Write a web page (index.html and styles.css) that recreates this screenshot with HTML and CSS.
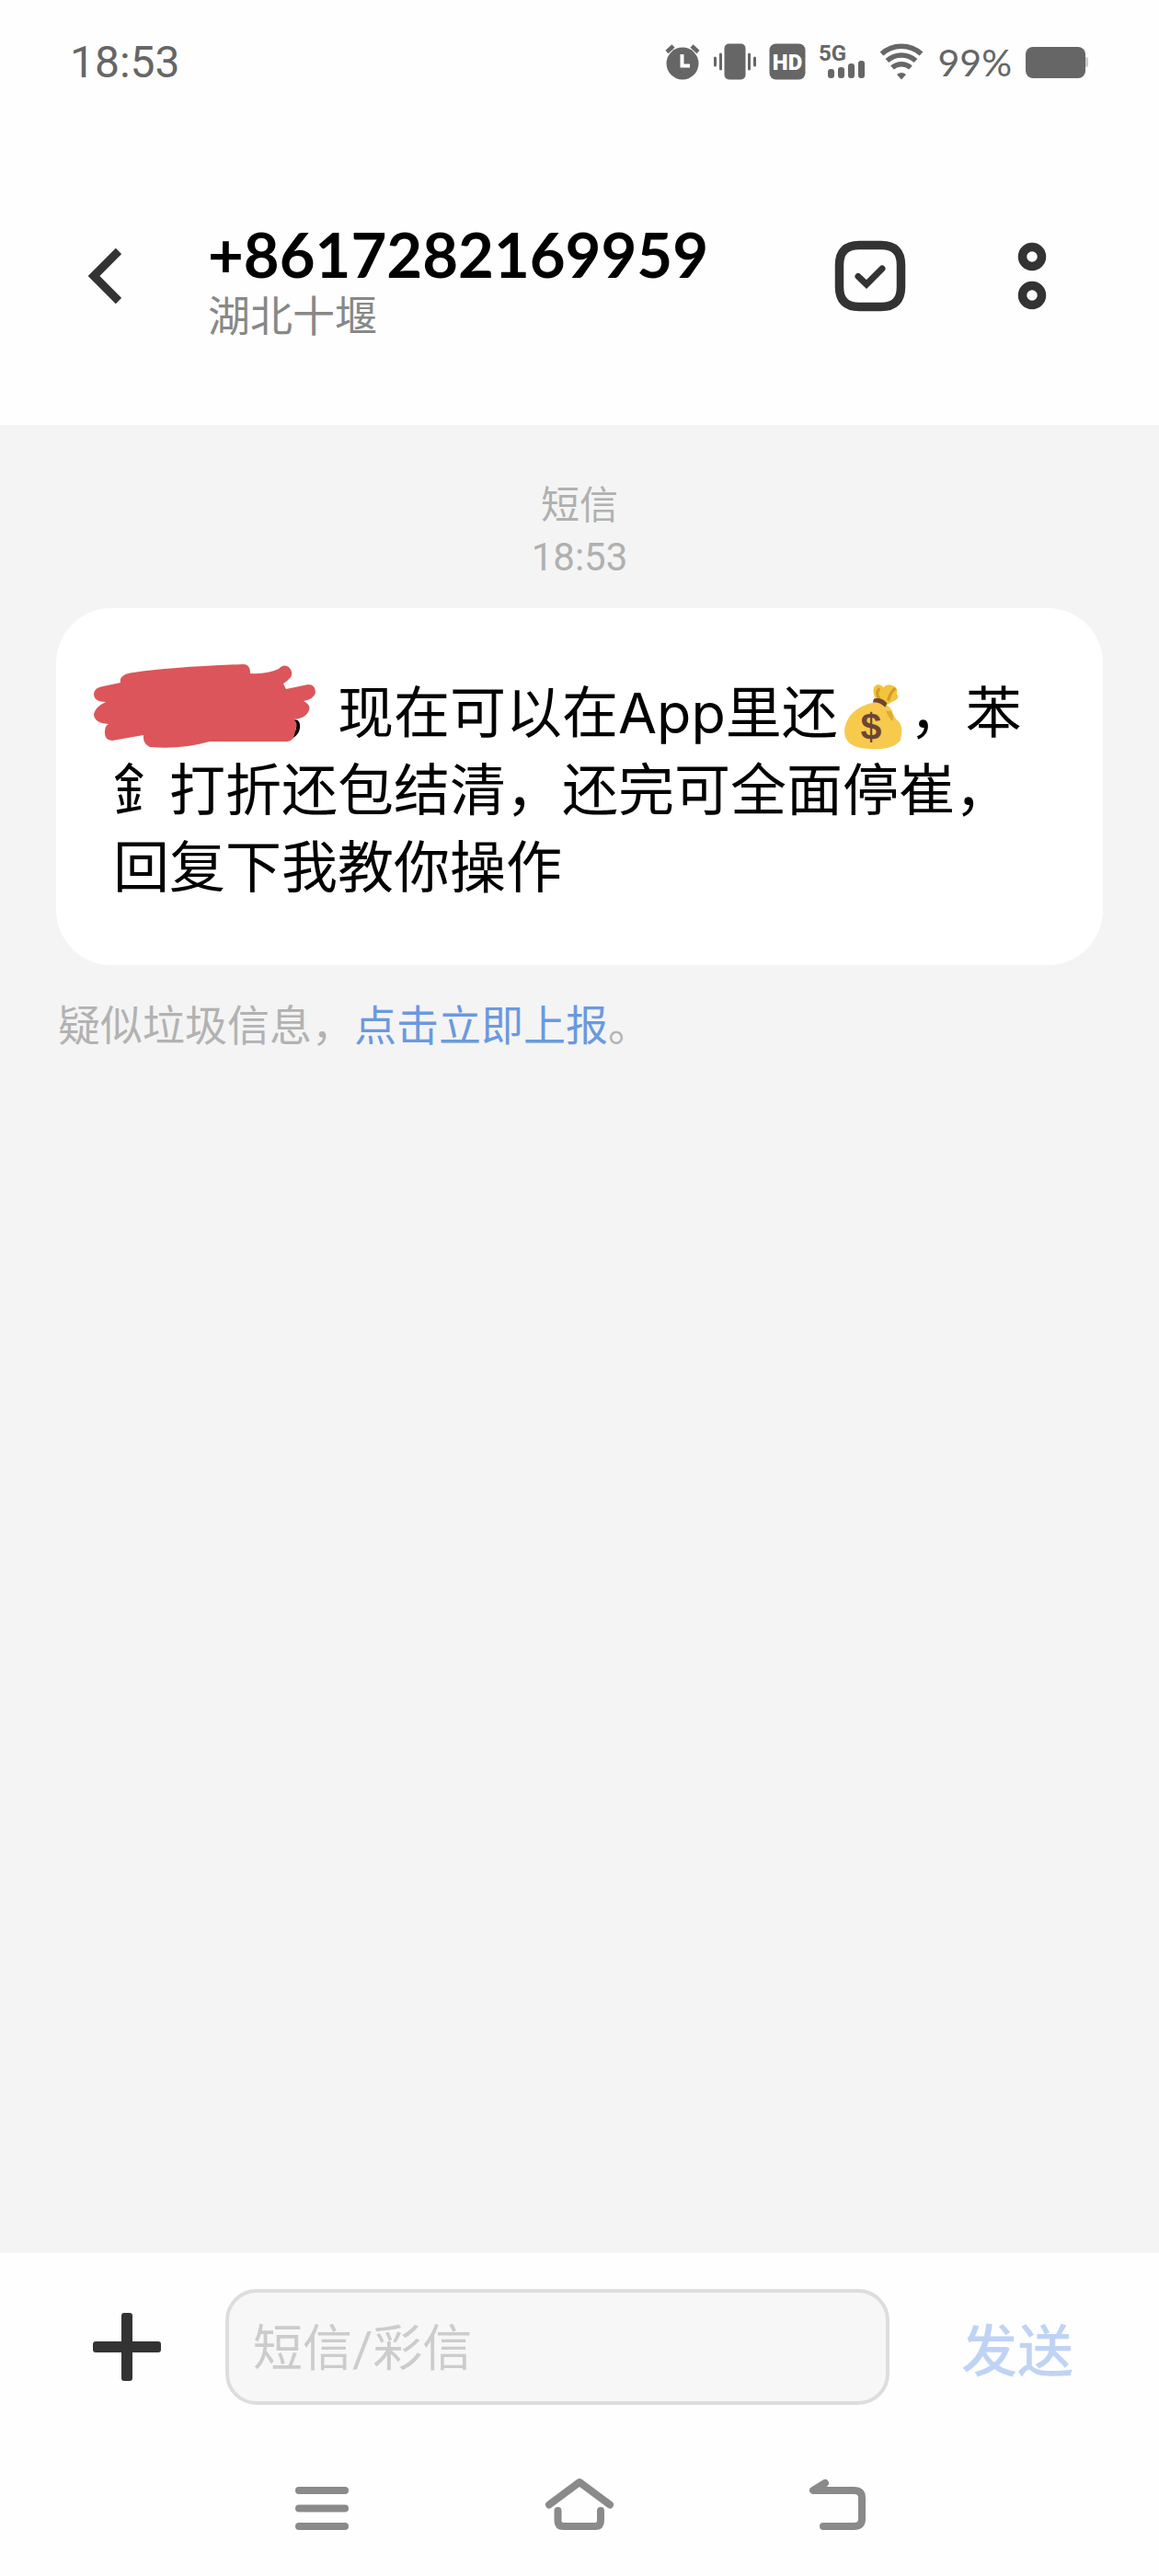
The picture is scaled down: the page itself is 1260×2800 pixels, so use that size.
FILE: index.html
```html
<!DOCTYPE html>
<html lang="zh-CN">
<head>
    <meta charset="UTF-8">
    <meta name="viewport" content="width=device-width, initial-scale=1.0">
    <title>短信</title>
    <link rel="stylesheet" href="styles.css">
</head>
<body>
    <div class="status-bar">
        <span class="clock">18:53</span>
        <div class="status-icons">
            <!-- alarm -->
            <svg width="40" height="40" viewBox="0 0 40 40">
                <circle cx="20" cy="22" r="17.5"/>
                <path d="M3 9.500l7-6.500M37 9.500l-7-6.500" stroke="#666" stroke-width="4.500"/>
                <path d="M19.500 12v12.500h8.500" fill="none" stroke="#fff" stroke-width="4"/>
            </svg>
            <!-- vibrate -->
            <svg width="46" height="40" viewBox="0 0 46 40">
                <rect x="11.500" y="0.500" width="23" height="39" rx="5"/>
                <path d="M1.500 16v8M7.500 12v16M38.500 12v16M44.500 16v8" stroke="#666" stroke-width="3" stroke-linecap="round"/>
            </svg>
            <!-- hd -->
            <svg width="40" height="40" viewBox="0 0 40 40">
                <rect x="0.500" y="0.500" width="39" height="39" rx="7"/>
                <text x="20" y="29" class="hd-text">HD</text>
            </svg>
            <!-- signal -->
            <svg width="52" height="40" viewBox="0 0 52 40">
                <text x="0" y="19" class="net-text">5G</text>
                <rect x="10" y="28" width="7" height="10" rx="3"/>
                <rect x="21" y="26" width="7" height="12" rx="3"/>
                <rect x="32" y="22" width="7" height="16" rx="3"/>
                <rect x="43" y="19" width="7" height="19" rx="3"/>
            </svg>
            <!-- wifi -->
            <svg width="48" height="40" viewBox="0 0 48 40">
                <g fill="none" stroke="#666" stroke-width="5.500">
                    <path d="M2.500 11.500a32 32 0 0 1 43 0"/>
                    <path d="M8.500 19a23 23 0 0 1 31 0"/>
                    <path d="M14 26.500a15 15 0 0 1 20 0"/>
                </g>
                <path d="M19 34a8 8 0 0 1 10 0l-5 5.500z"/>
            </svg>
            <span class="battery-level">99%</span>
            <!-- battery -->
            <svg width="70" height="40" viewBox="0 0 70 40">
                <rect x="64" y="15" width="5" height="11" rx="2" fill="#ccc"/>
                <rect x="1" y="4" width="65" height="34" rx="8"/>
            </svg>
        </div>
    </div>

    <header class="header">
        <button class="icon-button" aria-label="返回">
            <svg width="40" height="64" viewBox="0 0 40 64">
                <path d="M37 5L10 32l27 27" fill="none" stroke="#333" stroke-width="9"/>
            </svg>
        </button>
        <div class="contact">
            <h1>+8617282169959</h1>
            <p>湖北十堰</p>
        </div>
        <button class="icon-button" aria-label="选择">
            <svg width="78" height="78" viewBox="0 0 78 78">
                <path d="M27 5.500h24Q72.500 5.500 72.500 27v24Q72.500 72.500 51 72.500h-24Q5.500 72.500 5.500 51v-24Q5.500 5.500 27 5.500z" fill="none" stroke="#333" stroke-width="9.500"/>
                <path d="M26 39.500l9 8.500 17-17" fill="none" stroke="#333" stroke-width="7" stroke-linecap="round"/>
            </svg>
        </button>
        <button class="icon-button" aria-label="更多">
            <svg width="32" height="78" viewBox="0 0 32 78">
                <g fill="none" stroke="#333" stroke-width="9.500">
                    <circle cx="16" cy="18" r="10.500"/>
                    <circle cx="16" cy="60" r="10.500"/>
                </g>
            </svg>
        </button>
    </header>

    <main class="messages">
        <div class="message-time">
            <div>短信</div>
            <time>18:53</time>
        </div>
        <div class="bubble">
            <span class="redacted"><svg class="scribble" width="244" height="94" viewBox="0 0 244 94">
                <path d="M30 22Q28 13 44 11Q85 5 164 2Q171 2 171 12Q190 13 202 7Q207 1 213 5Q222 14 207 23L210 29L234 24Q242 24 242 33Q240 40 229 42Q237 46 235 52Q232 61 218 62Q224 66 220 74Q219 85 212 86H127Q95 95 62 92Q54 88 55 79L21 85Q12 84 13 75Q13 69 17 67Q1 66 1 56Q3 48 14 43Q1 43 1 34Q2 27 11 26Z"/>
            </svg></span>，现在可以在App里还<svg class="money-bag" width="78" height="74" viewBox="0 0 76 72" role="img" aria-label="钱袋">
                <path d="M40 17Q34 4 42 1Q46 1 48 4Q53-1 60 3Q64 6 62 11Q67 15 58 19L51 23z" fill="#f3c33b"/>
                <path d="M53 18Q56 8 61 5M44 16Q39 10 44 5" fill="none" stroke="#d39b25" stroke-width="3"/>
                <path d="M38 20Q50 18 57 28Q59 36 64 40Q70 46 66 60Q58 71 30 69Q5 67 7 48Q11 26 38 20z" fill="#f7ca4d"/>
                <path d="M56 29Q60 34 58 40Q53 36 51 29z" fill="#e0aa34"/>
                <path d="M38 16Q47 14 52 21L50 25Q44 19 37 20z" fill="#6d4534"/>
                <text x="35" y="59" class="dollar">$</text>
            </svg>，苯釒打折还包结清，还完可全面停崔，回复下我教你操作
        </div>
        <p class="spam-tip">疑似垃圾信息，<a href="#">点击立即上报</a>。</p>
    </main>

    <form class="composer">
        <button type="button" class="icon-button" aria-label="添加">
            <svg width="76" height="76" viewBox="0 0 76 76">
                <rect x="32" y="1" width="12" height="74" rx="3"/>
                <rect x="1" y="32" width="74" height="12" rx="3"/>
            </svg>
        </button>
        <input type="text" class="message-input" placeholder="短信/彩信" aria-label="短信内容">
        <button type="button" class="send-button">发送</button>
    </form>

    <nav class="nav-bar">
        <button class="icon-button" aria-label="最近任务">
            <svg width="76" height="60" viewBox="0 0 76 60">
                <path d="M13 14h50M13 33.500h50M13 53h50"/>
            </svg>
        </button>
        <button class="icon-button" aria-label="主屏幕">
            <svg width="76" height="60" viewBox="0 0 76 60">
                <path d="M5 29.500L38 5l33 24.500M14.500 36v11q0 6 6 6h34.500q6 0 6-6v-11"/>
            </svg>
        </button>
        <button class="icon-button" aria-label="后退">
            <svg width="76" height="60" viewBox="0 0 76 60">
                <path d="M25 6L12 14h44q9 0 9 8v23q0 8-9 8h-33"/>
            </svg>
        </button>
    </nav>
</body>
</html>
```

FILE: styles.css
```css
* {
    box-sizing: border-box;
}

body {
    margin: 0;
    min-height: 100vh;
    display: flex;
    flex-direction: column;
    background: #fefefe;
    color: #000;
    font-family: Roboto, "Noto Sans CJK SC", sans-serif;
}

h1,
p {
    margin: 0;
}

svg {
    display: block;
}

button {
    padding: 0;
    border: none;
    background: none;
    font-family: inherit;
    cursor: pointer;
}

.status-bar {
    display: flex;
    align-items: center;
    justify-content: space-between;
    height: 134px;
    padding: 0 76px;
}

.clock {
    font-size: 48px;
    color: #666;
}

.status-icons {
    display: flex;
    align-items: center;
    gap: 14px;
    fill: #666;
}

.battery-level {
    font-family: Lato, sans-serif;
    font-size: 41px;
    color: #666;
    margin-left: 2px;
}

.hd-text {
    font-family: Roboto, sans-serif;
    font-size: 24px;
    font-weight: 900;
    fill: #fff;
    text-anchor: middle;
}

.net-text {
    font-family: Roboto, sans-serif;
    font-size: 24px;
    font-weight: 700;
}

.header {
    display: flex;
    align-items: flex-start;
    padding: 108px 122px 84px 92px;
}

.icon-button {
    display: flex;
    align-items: center;
    justify-content: center;
}

.header .icon-button {
    height: 116px;
}

.contact {
    flex: 1;
    margin-left: 94px;
}

.contact h1 {
    font-family: Lato, sans-serif;
    font-size: 67px;
    line-height: 68px;
    font-weight: 700;
}

.contact p {
    font-size: 46px;
    line-height: 68px;
    color: #888;
}

.header .icon-button:last-child {
    margin-left: 121px;
}

.messages {
    flex: 1;
    padding: 60px 61px;
    background: #f4f4f4;
}

.message-time {
    text-align: center;
    font-size: 42px;
    line-height: 56px;
    color: #b0b0b0;
}

.bubble {
    margin-top: 27px;
    padding: 72px 62px 64px;
    border-radius: 60px;
    background: #fff;
    font-family: Inter, "Noto Sans CJK SC", sans-serif;
    font-size: 61px;
    line-height: 84px;
}

.redacted {
    position: relative;
    display: inline-block;
    width: 183px;
    height: 60px;
    vertical-align: middle;
}

/* hand-drawn strokes hiding the name */
.scribble {
    position: absolute;
    left: -22px;
    top: -30px;
    fill: #dc555a;
}

.money-bag {
    display: inline-block;
    vertical-align: middle;
}

.dollar {
    font-family: "Liberation Sans", sans-serif;
    font-size: 40px;
    font-weight: 700;
    fill: #6d4534;
    text-anchor: middle;
}

.spam-tip {
    margin-top: 32px;
    padding-left: 2px;
    font-size: 46px;
    line-height: 68px;
    color: #b2b2b2;
}

.spam-tip a {
    color: #6a99e0;
    text-decoration: none;
}

.composer {
    display: flex;
    align-items: center;
    height: 204px;
    padding: 0 93px 0 100px;
    fill: #333;
}

.message-input {
    flex: 1;
    min-width: 0;
    height: 126px;
    margin: 0 78px 0 69px;
    padding: 4px 26px 0;
    border: 4px solid #ddd;
    border-radius: 34px;
    background: #f7f7f7;
    font-family: inherit;
    font-size: 54px;
}

.message-input::placeholder {
    color: #ccc;
    opacity: 1;
}

.send-button {
    font-size: 61px;
    font-weight: 500;
    color: #bfd3f5;
}

.nav-bar {
    display: flex;
    align-items: center;
    justify-content: center;
    gap: 204px;
    height: 147px;
    padding-bottom: 8px;
}

.nav-bar path {
    fill: none;
    stroke: #8a8a8a;
    stroke-width: 8;
    stroke-linecap: round;
    stroke-linejoin: round;
}
```
